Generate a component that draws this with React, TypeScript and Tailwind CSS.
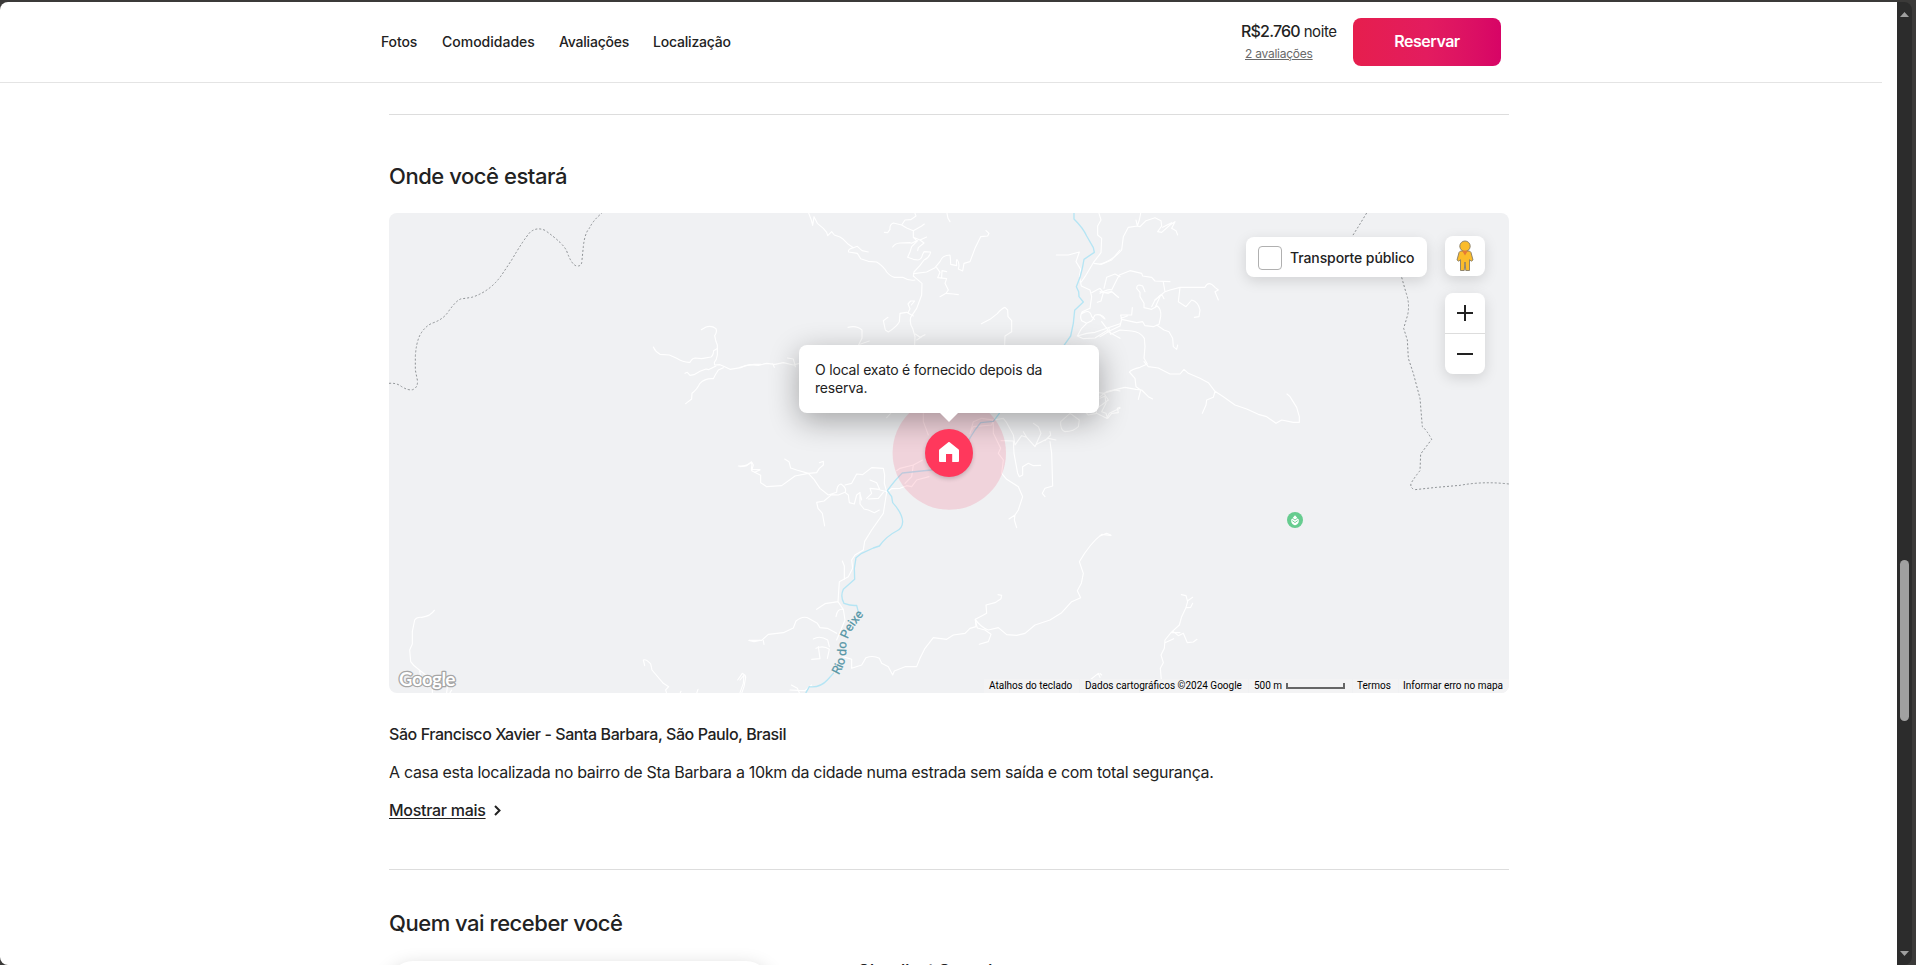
import React from "react";

const roadsWest = [
  "M820,441 Q826,455 840,463 L868,465 L890,475 Q910,488 930,487 Q936,475 945,474 L965,476 L993,471 Q1000,466 1001,452 L1011,446",
  "M964,389 L978,381 Q995,376 1008,386 Q1012,395 1004,407 Q1006,422 1012,435 L1012,465 Q1010,480 1003,487 L1004,495 L1020,494 Q1036,500 1050,508 L1082,503 L1095,497 L1122,493 L1142,493",
  "M915,520 L922,517 L930,526 L942,524 L960,514 L978,507 L985,509 L1008,498",
  "M917,611 L935,597 L936,580 Q950,570 960,550 Q975,534 1000,536 Q1005,525 1015,510 L1030,503",
  "M1075,798 Q1100,800 1114,786 Q1118,795 1114,808 L1140,809 M1124,817 L1140,810",
  "M163,1231 Q152,1248 125,1252 Q110,1250 104,1260 L97,1295 L97,1332 L89,1350 L92,1385 Q100,1398 118,1410 L135,1423 M118,1410 L122,1428 M157,1460 L157,1478 M202,1462 L200,1478 M215,1470 L210,1478",
  "M794,1397 L790,1380 Q798,1376 812,1392 L816,1410 L850,1450 L866,1460 L857,1470 L860,1480 M900,1480 L903,1474 M950,1480 L954,1468",
  "M1073,1440 L1087,1420 Q1098,1426 1097,1432 L1092,1460 L1085,1480",
  "M1107,1321 L1122,1325 L1140,1321",
];

const roadsCentre = [
  "M206,39 L214,60 L218,76 L222,50 L232,70 L250,85 L260,97 L263,107 L275,95 L283,105 L300,111 L310,118 L325,133 L340,143 L352,139 L366,152 L385,156",
  "M340,143 Q322,148 326,156 L352,160 L362,176 L385,184 L410,186 Q432,200 440,216 Q452,230 464,232 L488,232 Q505,243 525,240",
  "M525,40 L528,48 L512,59 L495,60 L485,75 L460,69 Q448,74 450,88 L443,98 L433,97 M485,75 L500,84 L520,92 L545,78 L553,72 M520,92 L520,112 L530,122 L515,130 L510,128 L480,129 Q465,130 458,141 M520,112 L540,120 L560,111 M540,120 L552,129 L535,143 L533,152 M533,122 L515,140 L510,156 L503,172 L520,178 L534,180 Q545,178 547,165 L552,155 L572,156 Q568,174 552,180 L540,196 L522,216 L520,228 L546,250 L545,285 L530,325 L512,352 Q508,370 518,385 L525,410 L524,436",
  "M521,221 L560,216 L585,203 L600,185 Q607,165 630,165 Q632,180 632,193 L650,197 Q648,175 652,180 Q660,190 655,207 L668,213 L672,190 L690,185 L705,145 L722,110 L743,108 L747,100 L738,92",
  "M621,40 L624,55 L630,65 M590,203 L600,217 L593,233 L620,236 L615,250 L625,270 L618,280 L600,290 M605,232 L606,212 L620,215 M618,280 L640,282 L655,284",
  "M444,352 L430,362 L436,390 L445,396 Q470,380 478,365 L480,340 L500,337 L520,348 M505,337 L510,326 L504,312 L512,303 L524,303 L514,315 M526,402 L540,412 L555,404 M530,420 L545,410",
  "M324,382 Q350,375 366,390 L366,415 L355,436 M360,433 L388,423",
  "M724,371 L750,358 L772,341 Q785,325 795,322 L803,330 L804,350 L815,362 L815,395 L795,408 L794,436",
  "M1077,40 L1083,60 L1073,78 L1073,105 L1085,115 L1083,158 L1060,188 L1035,230 L1024,246",
  "M949,165 L985,165 L1018,156 L1008,185 L1022,208 L1018,230 L1024,258 L1050,270 L1055,290 L1050,325 L1027,335 Q1018,350 1025,362 L1040,370 L1055,362 L1065,345 Q1085,340 1095,357 M1027,340 Q1050,325 1055,350 L1063,358 M1040,370 L1025,385 L1012,408 L1030,416 L1065,414 L1100,392 L1140,415 M1012,408 L1040,400 L1065,397 L1140,371 M1085,365 L1105,392",
  "M1062,190 L1085,193 L1115,180 L1140,150 M1055,278 L1080,265 L1090,278 L1083,303 L1072,307 M1090,278 L1115,275 L1135,292 M1092,265 L1100,232 L1125,222 L1140,230",
  "M0,502 L30,494 L55,496 L80,490 L105,493 L130,488 L160,495 L178,490 M98,491 L103,502 M142,474 L160,477 L166,500",
  "M0,800 L18,798 L35,786 L40,795 L35,812 L62,826 L62,848 L80,860 L125,857 L165,828 L205,820 L222,838 L240,865 L265,885 L290,877 Q290,855 303,852 Q322,865 315,877 L295,885 L275,884 L252,903 L230,907 L234,925 L247,940 L254,978",
  "M134,777 L147,785 L152,804 L170,810 L205,820 L230,818 L238,805 L250,795 L250,784 L238,788 M315,855 L335,850 L350,822 L368,824 L395,803 L430,805 L434,825 L433,850 L440,875 L420,870 L410,848 L390,840 M315,877 L325,885 L328,908 L343,912 L350,885 L360,877 L360,912 L372,927 L385,930 L403,938 L418,930 M418,868 L390,865 L395,880 L380,895 M430,877 L415,895 L385,897 M360,880 L365,900",
  "M440,876 L430,940 L395,990 L374,1024 L370,1050 L345,1065 L335,1080 L338,1105 L325,1130 L298,1145 L294,1205 L310,1228 L315,1260 L290,1320 M307,1083 L313,1098 L313,1138 M230,1228 L255,1211 L294,1205 M288,1250 Q292,1225 308,1228",
  "M27,1321 L65,1321 L85,1303 L130,1298 L160,1284 L168,1263 Q190,1245 208,1256 L232,1270 L240,1283 L262,1285 L290,1300 M70,1322 L72,1333 M220,1317 Q240,1305 263,1320 L268,1340 M228,1345 Q250,1335 268,1348 L262,1375 M215,1378 L240,1376 L235,1340",
  "M308,1370 L335,1378 L335,1405 L365,1395 L378,1373 Q400,1365 418,1375 L425,1390 L445,1400 L458,1425 L463,1413 L495,1400 L530,1400 L540,1375 L555,1345 L580,1313 L620,1318 L640,1305 L675,1300 L690,1285 L708,1280 L706,1258 L725,1248 L740,1240 L738,1215 L765,1208 L783,1196 L785,1186 L774,1184",
  "M706,1258 Q720,1280 745,1290 L775,1283 L800,1304 L830,1306 L855,1300 L885,1275 L930,1260 L965,1238 L995,1205 L1022,1193 L1012,1172 L1024,1150 L1030,1120 L1018,1085 Q1050,1030 1085,1003 L1112,1006 M718,1333 L745,1325 L753,1303 L735,1290 L712,1284 L706,1262",
  "M154,1455 L172,1465 L178,1478 M150,1470 L195,1472 L215,1455 M0,1440 L12,1425 L10,1450 L0,1478 M1050,1440 L1075,1420 L1080,1432",
  "M440,653 L452,640 M550,640 L550,665 L565,705 M567,830 L530,840 L515,860 L500,857 L480,865 L455,866 L440,878 M470,812 L480,805 L520,795 L548,780 M520,795 L515,830 L495,850 M690,700 L700,665 L725,655 L760,660 L755,675 L700,680 L695,690 M760,660 L760,700 L782,745 L775,760 L790,780 L785,820 L800,838 L835,860 L848,890 L835,930 L825,945 L823,960 L830,983 M825,945 L807,957",
  "M760,660 L790,655 L800,668 L820,705 L825,735 L845,707 L860,712 L885,740 L903,700 L895,680 L880,670 M860,712 L850,695 M783,722 L820,723 L822,760 L833,820 L838,830 L848,825 L848,800 L865,790 L880,797 L902,796 M890,733 L925,715 L948,720 M915,722 L932,705 L930,695 M930,725 L935,760 L938,858 L915,865 L907,880 L915,890",
  "M1077,578 L1092,580 L1105,600 L1085,615 L1070,625 L1020,620 L990,640 L962,665 Q960,690 975,695 Q1000,695 1015,680 L1018,660 L990,640 M1020,620 L1045,645 L1070,640 L1065,620 M1070,640 L1100,655 L1108,640 L1140,625 M1092,580 L1125,570 L1140,573",
];

const roadsEast = [
  "M0,193 Q40,180 65,150 L70,110 L85,82 L112,78 L118,60 L122,40 M108,60 L112,78 L120,80 L138,62 L165,53 L183,62 L185,78 L173,95 L185,97 L210,75 L225,65 L215,85 L228,92 L233,105 M188,82 L215,68",
  "M0,280 Q25,265 35,270 L50,240 L58,225 L90,212 L125,220 L128,228 L155,232 L165,243 L210,245 M0,275 L25,280 L35,275 L56,292 M190,247 L195,275 M165,300 L195,275 L210,270 L240,262 L280,262 L315,262 Q325,240 345,262 L355,270 L345,275 L355,300 M240,262 L235,305 L258,320 L275,300 Q295,305 300,330 L297,350 L283,352 M192,296 L185,283",
  "M135,275 L128,258 Q110,250 110,265 L120,277 L120,290 L132,310 L132,323 L155,328 L172,318 Q185,330 182,350 L177,373 L160,380 L135,377 L128,365 L110,368 L65,358 L60,378 L30,392 L0,410 M165,323 L182,285 L165,300 L155,320 M65,358 L62,345 L95,345 L97,323 M63,355 L82,348 M170,375 L192,390 L207,395 L218,415 L220,440 L230,448 L233,435",
  "M26,383 L32,403 M0,345 L13,356 M32,403 L60,390 L95,393 Q120,395 133,415 L135,440 L132,475 L142,492 L120,502 Q95,508 88,516 L105,535 L108,560 L122,570 L115,598 M0,590 L20,575 L75,562 L108,568 L125,570 L145,590 L158,597",
  "M132,485 L145,500 L175,504 L210,522 L240,522 L252,508 L265,520 L300,535 L325,548 L345,574 L370,590 L405,615 L440,627 L475,643 L500,650 L528,670 L545,660 L580,667 L598,667 L598,650 L590,622 L570,590 L561,582 M345,574 L340,592 L320,600 L318,615 L307,640",
  "M0,595 L15,588 L18,610 L5,635 L18,640 L23,655 L35,640 L55,638 L52,625 L60,622",
  "M0,1008 L20,1000 L33,1006 M0,1420 L5,1425",
  "M244,1184 L258,1187 L263,1205 L257,1225 L245,1250 L238,1275 L213,1298 L195,1320 L193,1345 L183,1365 L190,1388 L181,1405 L184,1440 L205,1478 M262,1203 L278,1192 M260,1223 L272,1222 L278,1210 M213,1298 L220,1295 L235,1307 L250,1300 L262,1328 L280,1326 L291,1318 M195,1328 L221,1316 M213,1298 L240,1298",
];

function MapDrawing() {
  return (
    <svg viewBox="389 213 1120 480" className="block h-full w-full" fill="none" strokeLinejoin="round" strokeLinecap="round">
      <g stroke="#ffffff" strokeWidth="3.4">
        <g transform="translate(380 200) scale(.33333)">
          {roadsWest.map((d, i) => <path key={i} d={d} />)}
        </g>
        <g transform="translate(740 200) scale(.33333)">
          {roadsCentre.map((d, i) => <path key={i} d={d} />)}
        </g>
        <g transform="translate(1100 200) scale(.33333)">
          {roadsEast.map((d, i) => <path key={i} d={d} />)}
        </g>
      </g>
      <g transform="translate(740 200) scale(.33333)">
        <path
          stroke="#b5e5f4"
          strokeWidth="4"
          d="M1002,39 L1002,57 Q1030,85 1040,108 L1060,143 L1063,157 L1032,178 L1027,205 L1020,232 L1009,260 L1016,275 L1017,290 L1030,306 L1004,331 L1000,370 L992,408 L972,436 M778,640 L760,664 L722,668 L705,690 L685,722 L640,790 L573,810 L487,819 Q465,840 442,872 L455,890 L458,908 Q487,940 488,965 Q487,985 470,993 Q440,1008 418,1038 L400,1044 L365,1060 L348,1073 L343,1105 L344,1138 L310,1168 Q300,1190 312,1210 Q335,1218 350,1216 L356,1240 M280,1420 L262,1440 Q240,1464 208,1460 L198,1478"
        />
        <path id="river-label" d="M296,1426 Q322,1385 318,1340 Q322,1298 370,1246" />
        <text fill="#5796a6" stroke="#5796a6" strokeWidth=".8" className="text-[37px]" style={{ fontFamily: "Roboto, sans-serif" }}>
          <textPath href="#river-label">Rio do Peixe</textPath>
        </text>
      </g>
      <g stroke="#8d9194" strokeWidth="3" strokeDasharray="6 6" strokeLinecap="butt">
        <path transform="translate(380 200) scale(.33333)" d="M27,550 Q50,548 65,560 Q85,572 98,569 Q115,562 112,540 L106,510 L106,470 Q108,430 120,405 Q135,378 158,369 Q190,358 205,335 Q228,302 242,297 L275,292 Q330,275 365,225 L395,180 Q430,120 450,97 Q470,80 495,91 Q550,130 560,153 Q575,195 590,198 Q606,200 606,180 L610,140 Q614,100 628,85 Q640,60 666,39" />
        <path transform="translate(1100 200) scale(.33333)" d="M800,39 L775,80 L756,110 M905,232 L918,278 Q930,310 923,345 L911,385 L922,420 L925,475 L940,520 L960,595 L967,680 Q980,690 995,718 L962,762 L960,812 Q945,830 933,850 Q930,865 945,869 L1010,862 L1080,856 Q1150,843 1227,852" />
      </g>
      <circle cx="949.3" cy="453" r="56.7" fill="#f43f64" fillOpacity=".17" />
      <circle cx="1295" cy="520" r="8" fill="#66cc8f" />
      <path d="M1295 515.2l3.6 4.2c.8 3-1 5.2-3.6 5.8-2.600-.6-4.400-2.800-3.600-5.800z" fill="#fff" />
      <path d="M1292.500 518.200l2.500 1.800 2.500-1.800M1292.500 520.800l2.500 1.800 2.500-1.800" stroke="#66cc8f" strokeWidth=".9" />
      <text x="399" y="685.5" fill="#fff" stroke="#a6a6a6" strokeWidth="2.600" paintOrder="stroke" textLength="56.5" className="text-[19px] font-bold" style={{ fontFamily: "Lato, sans-serif" }}>Google</text>
    </svg>
  );
}

function Pegman() {
  return (
    <svg width="18" height="32" viewBox="0 0 18 32" className="block">
      <g fill="#fbbc2a" stroke="#857a68" strokeWidth=".9" strokeLinejoin="round">
        <path d="M4.500 11h9l1.500 1.500 2 7.500-1.800 1.200-1.700-1.500v10.800H9.800L9 22l-.8 8.500H4.500V19.700l-1.700 1.500L1 20l2-7.500z" />
        <circle cx="9" cy="6.200" r="5.200" />
      </g>
      <path d="M6.200 10.800h5.600L9 15.500z" fill="#e57a35" />
    </svg>
  );
}

function Controls() {
  return (
    <div className="absolute right-[24px] top-[23px] flex items-start gap-[18px] text-[#222]">
      <label className="mt-px flex h-10 w-[181px] items-center gap-2 rounded-lg bg-white pl-3 shadow-[0_4px_14px_rgba(0,0,0,0.13)]">
        <span className="mt-px size-6 rounded border border-[#b0b0b0] bg-white" />
        <span className="whitespace-nowrap text-[14px] font-medium tracking-[-0.1px]">Transporte público</span>
      </label>
      <div className="flex flex-col gap-[17px]">
        <button className="flex size-10 items-center justify-center rounded-lg bg-white shadow-[0_4px_14px_rgba(0,0,0,0.13)]">
          <Pegman />
        </button>
        <div className="flex flex-col rounded-lg bg-white shadow-[0_4px_14px_rgba(0,0,0,0.13)]">
          <button className="flex size-10 items-center justify-center">
            <svg width="16" height="16" viewBox="0 0 16 16" stroke="#222" strokeWidth="2"><path d="M8 0v16M0 8h16" /></svg>
          </button>
          <div className="h-px bg-[#dddddd]" />
          <button className="flex size-10 items-center justify-center">
            <svg width="16" height="16" viewBox="0 0 16 16" stroke="#222" strokeWidth="2"><path d="M0 8h16" /></svg>
          </button>
        </div>
      </div>
    </div>
  );
}

function Marker() {
  return (
    <>
      <div className="absolute left-[410px] top-[132px] h-[68px] w-[300px] rounded-lg bg-white px-4 pt-4 text-[14px] leading-[18px] tracking-[-0.2px] text-[#222] shadow-[0_8px_30px_rgba(0,0,0,0.32)]">
        O local exato é fornecido depois da
        <br />
        reserva.
        <svg width="18" height="9" viewBox="0 0 18 9" className="absolute left-[141px] top-[68px]"><path d="M0 0h18L9 9z" fill="#fff" /></svg>
      </div>
      <div className="absolute left-[536px] top-[216px] flex size-12 items-center justify-center rounded-full bg-[#ff385c] pb-0.5 shadow-[0_2px_4px_rgba(0,0,0,0.18)]">
        <svg width="20" height="20" viewBox="0 0 20 20"><path d="M9 .4a1.500 1.500 0 0 1 2 0l8.400 6.900c.4.300.6.700.6 1.200V19a1 1 0 0 1-1 1h-5.800v-8H7v8H1a1 1 0 0 1-1-1V8.500c0-.5.200-.9.600-1.200z" fill="#fff" /></svg>
      </div>
    </>
  );
}

function Attribution() {
  return (
    <div className="absolute bottom-0 right-0 flex h-[14px] items-center gap-px whitespace-nowrap font-[Roboto,sans-serif] text-[10px] text-black *:flex *:h-[14px] *:items-center *:bg-[#f3f3f4] *:pb-px">
      <span className="w-[95px] pl-[5px]">Atalhos do teclado</span>
      <span className="w-[168px] pl-[5px]">Dados cartográficos ©2024 Google</span>
      <span className="w-[103px] gap-1 pl-[5px]">
        500 m
        <span className="h-[6px] w-[59px] border-2 border-t-0 border-[#666]" />
      </span>
      <span className="w-[45px] pl-[4px]">Termos</span>
      <span className="w-[110px] pl-[4px]">Informar erro no mapa</span>
    </div>
  );
}

function Header() {
  return (
    <header className="flex h-[81px] w-[1882px] items-start border-b border-[#e4e4e4] text-[#222]">
      <nav className="ml-[381px] flex pt-[30px] text-[14px] font-medium leading-[20px]">
        <a className="w-[61px] tracking-[-0.15px]">Fotos</a>
        <a className="w-[117px]">Comodidades</a>
        <a className="w-[94px] tracking-[-0.2px]">Avaliações</a>
        <a className="tracking-[-0.2px]">Localização</a>
      </nav>
      <div className="ml-auto mr-[16px] w-[96px] whitespace-nowrap pt-[19px]">
        <div className="text-[15px] leading-[20px] tracking-[-0.4px]">
          <span className="text-[16px] font-medium tracking-[-0.8px]">R$2.760</span> noite
        </div>
        <div className="pl-[4px] pt-[2px] text-[12px] leading-[20px] tracking-[-0.25px] text-[#6a6a6a] underline">2 avaliações</div>
      </div>
      <button className="mr-[381px] mt-4 h-12 w-[148px] rounded-lg bg-linear-to-r from-[#e61e4d] via-[#e31c5f] to-[#d70466] pb-0.5 text-[16px] font-semibold tracking-[-0.5px] text-white">
        Reservar
      </button>
    </header>
  );
}

function Scrollbar() {
  return (
    <div className="flex h-full w-[15px] flex-col items-center rounded-r-lg bg-[#2c2c2c]">
      <svg width="9" height="5" viewBox="0 0 9 5" className="mt-[10px]"><path d="M4.500 0L9 5H0z" fill="#a0a0a0" /></svg>
      <div className="mt-[543px] h-[161px] w-[9px] rounded-full bg-[#a0a0a0]" />
      <svg width="9" height="5" viewBox="0 0 9 5" className="mb-[9px] mt-auto"><path d="M4.500 5L9 0H0z" fill="#a0a0a0" /></svg>
    </div>
  );
}

export default function App() {
  return (
    <div className="flex h-[965px] w-[1916px] overflow-hidden bg-[#3b3a39] pt-[2px] font-[Inter,sans-serif]">
      <div className="h-full w-[1897px] overflow-hidden rounded-l-lg bg-white text-[#222]">
        <Header />
        <main className="ml-[389px] w-[1120px]">
          <section className="mt-[31px] border-t border-[#dddddd] pt-12">
            <h2 className="text-[22px] font-medium leading-[26px] tracking-[-0.45px]">Onde você estará</h2>
            <div className="relative mt-6 h-[480px] overflow-hidden rounded-lg bg-[#f0f1f3]">
              <MapDrawing />
              <Attribution />
              <Marker />
              <Controls />
            </div>
            <div className="mt-[29px] flex flex-col gap-[14px] text-[16px] leading-[24px]">
              <h3 className="font-medium tracking-[-0.43px]">São Francisco Xavier - Santa Barbara, São Paulo, Brasil</h3>
              <p className="tracking-[-0.32px]">A casa esta localizada no bairro de Sta Barbara a 10km da cidade numa estrada sem saída e com total segurança.</p>
              <a className="flex items-center gap-2 font-medium tracking-[-0.28px]">
                <span className="underline underline-offset-2">Mostrar mais</span>
                <svg width="7" height="11" viewBox="0 0 7 11" fill="none" stroke="#222" strokeWidth="2"><path d="M1 1l4.500 4.500L1 10" /></svg>
              </a>
            </div>
          </section>
          <section className="mt-[47px] border-t border-[#dddddd] pt-10">
            <h2 className="text-[22px] font-medium leading-[26px] tracking-[-0.48px]">Quem vai receber você</h2>
            <div className="mt-[25px] flex gap-[87px]">
              <div className="h-[240px] w-[381px] rounded-3xl bg-white shadow-[0_6px_20px_rgba(0,0,0,0.2)]" />
              <h3 className="whitespace-nowrap text-[18px] font-medium leading-[22px] tracking-[-0.4px]">Claudio é Superhost</h3>
            </div>
          </section>
        </main>
      </div>
      <Scrollbar />
    </div>
  );
}
